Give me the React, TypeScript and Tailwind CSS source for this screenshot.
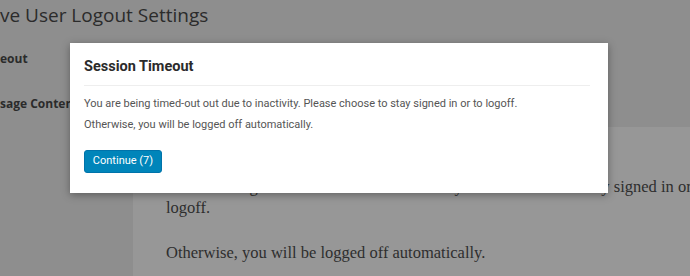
export default function App() {
  return (
    <div className="relative w-[690px] h-[276px] overflow-hidden bg-[#8e8e8e]">
      <h1 className="h-[30px] pt-[3px] text-[19px] leading-[24px] text-[#2b2b2b] font-['Open_Sans',sans-serif] whitespace-nowrap">
        ve User Logout Settings
      </h1>

      <div className="flex">
        {/* labels column */}
        <div className="w-[133px] shrink-0 font-['Open_Sans',sans-serif] text-[12px] font-bold text-[#2b2b2b] whitespace-nowrap">
          <div className="pt-[21px] leading-[16px]">eout</div>
          <div className="pt-[29px] leading-[16px]">sage Content</div>
        </div>

        {/* settings panel */}
        <div className="mt-[97px] h-[200px] min-w-0 flex-1 overflow-hidden bg-[#979797] pl-[33px] pt-[49px] font-['Liberation_Serif',serif] text-[16.5px] leading-[21px] text-[#2e2e2e]">
          <p className="whitespace-nowrap">
            You are being timed-out out due to inactivity. Please choose to stay signed in or
          </p>
          <p>logoff.</p>
          <p className="mt-[24px] whitespace-nowrap">Otherwise, you will be logged off automatically.</p>
        </div>
      </div>

      {/* modal */}
      <div className="absolute left-[70px] top-[43px] w-[538px] h-[150px] bg-white px-[14px] shadow-[0_2px_8px_rgba(0,0,0,0.35)] font-['Roboto',sans-serif]">
        <h2 className="mr-[4px] border-b border-[#eeeeee] pt-[15px] pb-[9px] text-[14.5px] leading-[18px] font-bold text-[#2b2b2b]">
          Session Timeout
        </h2>
        <p className="mt-[11px] text-[11px] leading-[14px] text-[#555555]">
          You are being timed-out out due to inactivity. Please choose to stay signed in or to logoff.
        </p>
        <p className="mt-[7px] text-[11px] leading-[14px] text-[#555555]">
          Otherwise, you will be logged off automatically.
        </p>
        <button className="mt-[18px] h-[23px] w-[78px] rounded-[3px] border border-[#0073aa] bg-[#0085ba] text-[11px] text-white">
          Continue (7)
        </button>
      </div>
    </div>
  )
}
